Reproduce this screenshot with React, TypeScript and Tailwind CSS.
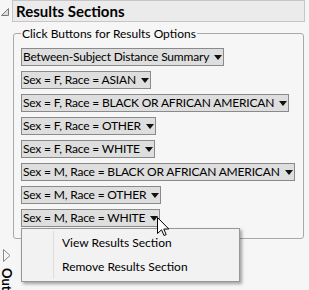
const buttons = [
  'Between-Subject Distance Summary',
  'Sex = F, Race = ASIAN',
  'Sex = F, Race = BLACK OR AFRICAN AMERICAN',
  'Sex = F, Race = OTHER',
  'Sex = F, Race = WHITE',
  'Sex = M, Race = BLACK OR AFRICAN AMERICAN',
  'Sex = M, Race = OTHER',
  'Sex = M, Race = WHITE',
];

const menuItems = ['View Results Section', 'Remove Results Section'];

function DropArrow() {
  return (
    <svg width="8" height="5" viewBox="0 0 8 5" className="shrink-0">
      <polygon points="0,0 8,0 4,5" fill="#111" />
    </svg>
  );
}

function ResultButton({ label }: { label: string }) {
  return (
    <div className="flex h-[18px] items-center gap-[5px] self-start border border-[#8a8a8a] bg-[#dedede] pl-[1px] pr-[1px] text-[12px] leading-none tracking-[-0.18px] text-black">
      <span>{label}</span>
      <DropArrow />
    </div>
  );
}

export default function App() {
  return (
    <div className="relative h-[290px] w-[309px] overflow-hidden bg-[#f6f6f6] font-['Lato',sans-serif]">
      {/* Outline header */}
      <div className="flex items-start">
        <div className="flex h-[22px] w-[12px] items-start pl-[1px] pt-[8px]">
          <svg width="9" height="9" viewBox="0 0 9 9">
            <polygon points="7.5,0.5 7.5,7.5 0.5,7.5" fill="#dcdcdc" stroke="#7a7a7a" />
          </svg>
        </div>
        <div className="flex h-[22px] w-[293px] items-center border border-[#c6c6c6] bg-[#ebebeb] pl-[3px]">
          <span className="text-[15px] font-bold leading-none text-black">Results Sections</span>
        </div>
      </div>

      {/* Options group */}
      <fieldset className="ml-[13px] mt-[4px] w-[291px] rounded-[3px] border border-[#a9a9a9] pb-[11px] pl-[7px]">
        <legend className="px-[1px] text-[12px] leading-[15px] text-black">
          Click Buttons for Results Options
        </legend>
        <div className="flex flex-col gap-[5px] pt-[7px]">
          {buttons.map((b) => (
            <ResultButton key={b} label={b} />
          ))}
        </div>
      </fieldset>

      {/* Collapsed outline node below */}
      <div className="flex w-[13px] flex-col items-center pt-[10px]">
        <svg width="8" height="13" viewBox="0 0 8 13">
          <polygon points="0.5,0.5 7,6.5 0.5,12.5" fill="#f6f6f6" stroke="#8a8a8a" />
        </svg>
        <span className="mt-[6px] text-[13px] font-bold leading-none text-black [writing-mode:vertical-rl]">
          Output
        </span>
      </div>

      {/* Context menu */}
      <div className="absolute left-[21px] top-[228px] flex w-[219px] border border-[#979797] bg-[#f2f2f2] py-[2px] shadow-[2px_2px_3px_rgba(0,0,0,0.35)]">
        <div className="w-[32px] shrink-0 border-r border-[#dedede]" />
        <div className="flex flex-col">
          {menuItems.map((m) => (
            <div key={m} className="flex h-[24px] items-center pl-[8px] text-[12px] text-black">
              {m}
            </div>
          ))}
        </div>
      </div>

      {/* Mouse pointer */}
      <svg
        width="13"
        height="20"
        viewBox="0 0 13 20"
        className="absolute left-[157px] top-[217px]"
      >
        <path
          d="M0.5,0.5 L0.5,16.5 L4.5,12.8 L7,18.5 L9.2,17.6 L6.8,12 L11.8,12 Z"
          fill="#fff"
          stroke="#000"
          strokeWidth="1"
          strokeLinejoin="miter"
        />
      </svg>
    </div>
  );
}
